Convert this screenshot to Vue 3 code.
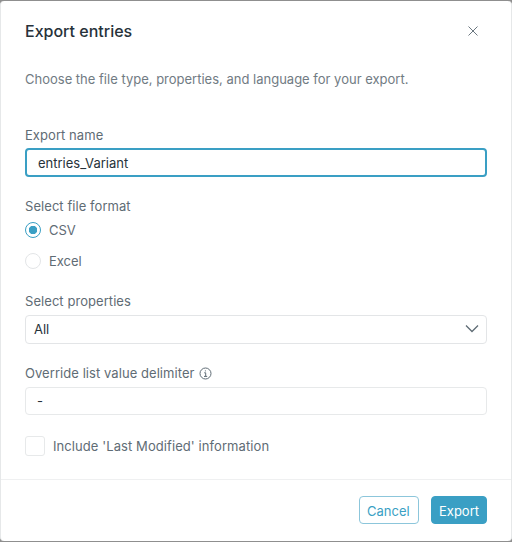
<template>
  <div class="backdrop">
    <div class="modal">
      <div class="modal-header">
        <h2>Export entries</h2>
        <button class="close-btn" aria-label="Close">
          <svg width="12" height="12" viewBox="0 0 12 12">
            <path d="M1.5 1.5l9 9M10.5 1.5l-9 9" stroke="#6b7780" stroke-width="1" fill="none" />
          </svg>
        </button>
      </div>

      <div class="modal-body">
        <p class="intro">Choose the file type, properties, and language for your export.</p>

        <label class="field-label name-label">Export name</label>
        <input v-model="exportName" class="text-input focused" />

        <label class="field-label format-label">Select file format</label>
        <div
          v-for="format in formats"
          :key="format"
          class="radio-row"
          @click="selectedFormat = format"
        >
          <span class="radio" :class="{ checked: selectedFormat === format }"></span>
          <span>{{ format }}</span>
        </div>

        <label class="field-label props-label">Select properties</label>
        <div class="select-box">
          <span>All</span>
          <svg width="16" height="10" viewBox="0 0 16 10">
            <path d="M2 1.5l6 6 6-6" stroke="#5f6c75" stroke-width="1.3" fill="none" />
          </svg>
        </div>

        <label class="field-label delim-label">
          Override list value delimiter
          <svg class="info" width="13" height="13" viewBox="0 0 13 13">
            <circle cx="6.5" cy="6.5" r="5.5" stroke="#5f6c75" stroke-width="1" fill="none" />
            <path d="M5.2 5.8h1.5v3.4M5 9.4h3.2M6.4 3.4v1" stroke="#5f6c75" stroke-width="1" fill="none" />
          </svg>
        </label>
        <input v-model="delimiter" class="text-input" />

        <div class="check-row">
          <span class="checkbox"></span>
          <span>Include 'Last Modified' information</span>
        </div>
      </div>

      <div class="modal-footer">
        <button class="btn btn-outline">Cancel</button>
        <button class="btn btn-primary">Export</button>
      </div>
    </div>
  </div>
</template>

<script setup>
import { ref } from 'vue';

const exportName = ref('entries_Variant');
const delimiter = ref('-');
const formats = ['CSV', 'Excel'];
const selectedFormat = ref('CSV');
</script>

<style>
html,
body {
  margin: 0;
  background: #8f8f8f;
}
</style>

<style scoped>
.backdrop {
  width: 512px;
  height: 542px;
  padding: 1px 0 1px;
  box-sizing: border-box;
  font-family: Inter, "Noto Sans", sans-serif;
  font-size: 13px;
  color: #5f6c75;
}

.modal {
  height: 100%;
  background: #fff;
  border-radius: 4px;
  border-left: 1px solid #e6e8e9;
  border-right: 1px solid #e6e8e9;
  box-sizing: border-box;
  display: flex;
  flex-direction: column;
}

.modal-header {
  display: flex;
  justify-content: space-between;
  align-items: center;
  height: 30px;
  margin-top: 15px;
  padding: 0 32px 0 24px;
}

h2 {
  margin: 0;
  font-size: 16px;
  font-weight: 500;
  color: #27323a;
}

.close-btn {
  display: flex;
  padding: 0;
  border: none;
  background: none;
}

.modal-body {
  flex: 1;
  padding: 0 24px;
  display: flex;
  flex-direction: column;
  align-items: flex-start;
}

.intro {
  margin: 23px 0 0;
  line-height: 20px;
  font-size: 13px;
  color: #717b83;
}

.field-label {
  display: flex;
  align-items: center;
  gap: 4px;
  height: 20px;
  font-size: 13px;
  letter-spacing: 0.06px;
}

.name-label {
  margin-top: 36px;
}

.format-label {
  height: 16px;
  margin-top: 21px;
}

.props-label {
  margin-top: 15px;
}

.delim-label {
  margin-top: 19px;
}

.info {
  margin-top: 1px;
}

.text-input {
  width: 100%;
  height: 28px;
  margin-top: 4px;
  padding: 0 11px;
  box-sizing: border-box;
  border: 1px solid #e7e9ea;
  border-radius: 4px;
  outline: none;
  font: inherit;
  font-size: 13px;
  color: #27323a;
}

.text-input.focused {
  height: 29px;
  margin-top: 3px;
  border: 2px solid #3a9fc4;
}

.radio-row {
  display: flex;
  align-items: center;
  gap: 8px;
  height: 31px;
  cursor: pointer;
}

.radio {
  width: 16px;
  height: 16px;
  box-sizing: border-box;
  border: 1px solid #e3e5e7;
  border-radius: 50%;
}

.radio.checked {
  border-color: #3a9fc4;
  background: radial-gradient(circle, #3a9fc4 0 4px, #fff 4.5px);
}

.select-box {
  width: 100%;
  height: 29px;
  margin-top: 4px;
  padding: 0 6px 1px 8px;
  box-sizing: border-box;
  display: flex;
  align-items: center;
  justify-content: space-between;
  border: 1px solid #e3e5e7;
  border-radius: 4px;
  color: #27323a;
}

.check-row {
  display: flex;
  align-items: center;
  gap: 8px;
  margin-top: 21px;
  height: 20px;
  letter-spacing: 0.08px;
}

.checkbox {
  width: 20px;
  height: 20px;
  box-sizing: border-box;
  border: 1px solid #e7e9ea;
  border-radius: 3px;
}

.modal-footer {
  height: 62px;
  box-sizing: border-box;
  border-top: 1px solid #eff0f1;
  padding: 16px 24px 0;
  display: flex;
  justify-content: flex-end;
  gap: 12px;
}

.btn {
  height: 28px;
  padding: 1px 9px 0 7px;
  box-sizing: border-box;
  border-radius: 4px;
  font: inherit;
  font-size: 13px;
  cursor: pointer;
}

.btn-outline {
  width: 60px;
  background: #fff;
  border: 1px solid #8cc6db;
  color: #3a9fc4;
}

.btn-primary {
  width: 56px;
  background: #3a9fc4;
  border: 1px solid #3a9fc4;
  color: #fff;
}
</style>
